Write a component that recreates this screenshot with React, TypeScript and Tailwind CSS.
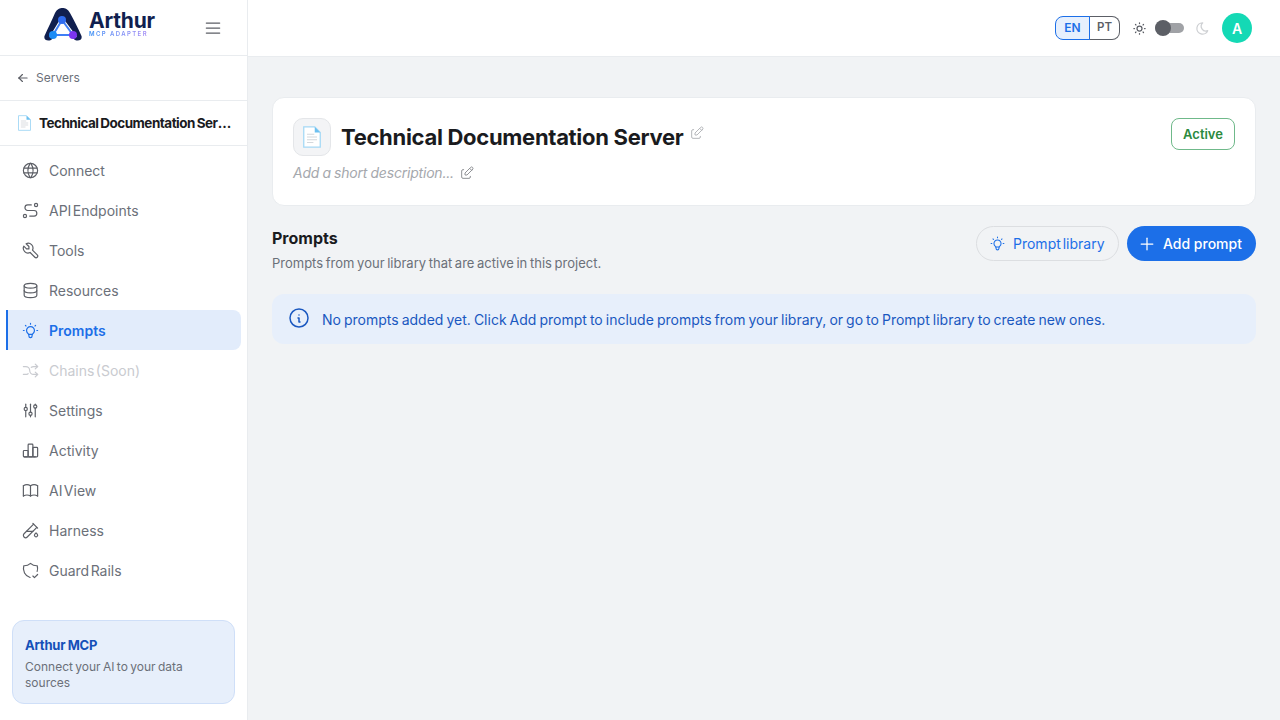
import { FC, ReactNode } from "react";
import {
  TbAdjustments,
  TbArrowLeft,
  TbArrowsShuffle,
  TbBook,
  TbBulb,
  TbChartBar,
  TbDatabase,
  TbEdit,
  TbInfoCircle,
  TbMenu2,
  TbMoon,
  TbPlus,
  TbRoute,
  TbShieldCheck,
  TbSun,
  TbTestPipe,
  TbTool,
  TbWorld,
} from "react-icons/tb";

const navItems = [
  { label: "Connect", icon: <TbWorld size={19} strokeWidth={1.5} /> },
  { label: "API Endpoints", icon: <TbRoute size={19} strokeWidth={1.5} /> },
  { label: "Tools", icon: <TbTool size={19} strokeWidth={1.5} /> },
  { label: "Resources", icon: <TbDatabase size={19} strokeWidth={1.5} /> },
  { label: "Prompts", icon: <TbBulb size={19} strokeWidth={1.5} />, active: true },
  { label: "Chains (Soon)", icon: <TbArrowsShuffle size={19} strokeWidth={1.5} />, disabled: true },
  { label: "Settings", icon: <TbAdjustments size={19} strokeWidth={1.5} /> },
  { label: "Activity", icon: <TbChartBar size={19} strokeWidth={1.5} /> },
  { label: "AI View", icon: <TbBook size={19} strokeWidth={1.5} /> },
  { label: "Harness", icon: <TbTestPipe size={19} strokeWidth={1.5} /> },
  { label: "Guard Rails", icon: <TbShieldCheck size={19} strokeWidth={1.5} /> },
];

const PageIcon: FC<{ className: string }> = ({ className }) => (
  <svg viewBox="0 0 20 24" className={className}>
    <path d="M1 1h12l6 6v16H1z" fill="#fff" stroke="#a5d8f5" strokeWidth="1.4" />
    <path d="M13 1v6h6z" fill="#6cc0f0" />
    <path d="M4.5 9h8M4.5 12h11M4.5 15h11M4.5 18h7" stroke="#d4d8dc" strokeWidth="1.3" />
  </svg>
);

const Logo = () => (
  <div className="flex items-start gap-[7px] -mt-[7px]">
    <svg viewBox="0 0 38 33" className="w-[38px] h-[33px] shrink-0">
      <path
        d="M0.5 28 C4 20 8 12 11 5 C13 1 16 0 18.5 0 C21 0 24 1 26 5 C30 12 34 20 37.5 28 C38.5 31.5 35 33.5 31 32 L18.5 22 L7 32 C3 33.5 -0.5 31.5 0.5 28Z"
        fill="#101f4f"
      />
      <path d="M18 12 L9 27 L29 27Z" fill="#fff" stroke="#fff" strokeWidth="4" />
      <path d="M18 12 L9 27 L29 27Z" fill="#fff" stroke="#3f7ff5" strokeWidth="2" />
      <circle cx="18" cy="12" r="4" fill="#2f6cf0" />
      <circle cx="9" cy="27" r="4" fill="#1d8cf5" />
      <circle cx="29" cy="27" r="4" fill="#7a35f0" />
    </svg>
    <div className="flex flex-col items-start mt-[4px]">
      <span className="text-[21px] leading-[18px] font-bold text-[#101f4f] tracking-[-0.2px]">Arthur</span>
      <span className="text-[6px] leading-[7px] font-semibold tracking-[1.4px] bg-gradient-to-r from-[#2f8cf5] to-[#a58cf5] bg-clip-text text-transparent">
        MCP ADAPTER
      </span>
    </div>
  </div>
);

const SideRow: FC<{ children: ReactNode; className: string }> = ({ children, className }) => (
  <div className={`flex items-center border-b border-[#e9ecef] ${className}`}>{children}</div>
);

const Sidebar = () => (
  <aside className="flex flex-col w-[248px] h-[720px] shrink-0 bg-white border-r border-[#e9ecef]">
    <SideRow className="h-[56px] pl-[44px] pr-[24px] justify-between">
      <Logo />
      <TbMenu2 size={20} strokeWidth={1.5} className="text-[#5c5f66]" />
    </SideRow>
    <SideRow className="h-[45px] pl-[16px] gap-[6px] text-[12px] text-[#6b7079]">
      <TbArrowLeft size={14} className="text-[#5c5f66]" />
      <span>Servers</span>
    </SideRow>
    <SideRow className="h-[45px] pl-[17px] pr-[14px] gap-[7px]">
      <PageIcon className="w-[15px] h-[16px] shrink-0" />
      <span className="truncate text-[13.5px] font-bold tracking-[-0.5px] [word-spacing:-1px] text-[#1a1b1e]">
        Technical Documentation Server
      </span>
    </SideRow>
    <nav className="flex flex-col mt-[4px] pl-[6px] pr-[6px]">
      {navItems.map((item) => (
        <div
          key={item.label}
          className={`flex items-center h-[40px] gap-[9px] pl-[13px] text-[14px] [word-spacing:-2.5px] rounded-r-lg border-l-2 ${
            item.active
              ? "bg-[#e2ecfb] border-[#1c6fe8] text-[#1c6fe8] font-semibold"
              : item.disabled
                ? "border-transparent text-[#c9cbd0]"
                : "border-transparent text-[#6b7079]"
          }`}
        >
          <span className={item.active || item.disabled ? "" : "text-[#5c5f66]"}>{item.icon}</span>
          <span>{item.label}</span>
        </div>
      ))}
    </nav>
    <div className="mt-auto mx-[12px] mb-[16px] h-[84px] px-[12px] pt-[14px] rounded-xl bg-[#e7effb] border border-[#cfdff8]">
      <div className="text-[13px] leading-[20px] font-bold text-[#1450b8] tracking-[-0.2px] [word-spacing:-0.5px]">
        Arthur MCP
      </div>
      <div className="mt-[4px] text-[12px] leading-[16px] text-[#6b7079] [word-spacing:-1px]">
        Connect your AI to your data sources
      </div>
    </div>
  </aside>
);

const TopBar = () => (
  <header className="flex items-center justify-end h-[57px] pr-[28px] bg-white border-b border-[#e9ecef]">
    <div className="flex text-[12px] font-semibold h-[24px]">
      <span className="flex items-center justify-center w-[35px] rounded-l-lg border border-[#1c6fe8] bg-[#e7f0fd] text-[#1c6fe8]">
        EN
      </span>
      <span className="flex items-center justify-center w-[31px] -ml-px rounded-r-lg border border-[#5c5f66] border-l-[#1c6fe8] text-[11.5px] text-[#5c5f66]">
        PT
      </span>
    </div>
    <TbSun size={15} className="ml-[12px] text-[#5c5f66]" />
    <div className="relative ml-[8px] w-[29px] h-[10px] rounded-full bg-[#a0a2a6]">
      <span className="absolute left-0 top-[-3px] w-[16px] h-[16px] rounded-full bg-[#5c5f66]" />
    </div>
    <TbMoon size={15} className="ml-[11px] text-[#ced0d3]" />
    <span className="flex items-center justify-center ml-[12px] w-[30px] h-[30px] rounded-full bg-[#14d9b5] text-white text-[14px] font-semibold">
      A
    </span>
  </header>
);

const ServerCard = () => (
  <section className="flex justify-between h-[109px] p-[20px] bg-white rounded-xl border border-[#e9ecef]">
    <div>
      <div className="flex items-center">
        <span className="flex items-center justify-center w-[38px] h-[38px] rounded-[10px] bg-[#f3f4f6] border border-[#e4e6e9]">
          <PageIcon className="w-[20px] h-[22px]" />
        </span>
        <h1 className="ml-[10px] text-[22px] leading-[32px] font-bold text-[#1a1b1e] tracking-[-0.3px]">
          Technical Documentation Server
        </h1>
        <TbEdit size={16} strokeWidth={1.5} className="ml-[6px] -mt-[8px] text-[#b5b7bb]" />
      </div>
      <div className="flex items-center mt-[6px] gap-[5px]">
        <span className="text-[14px] leading-[22px] italic text-[#a5a8ad] tracking-[-0.2px] [word-spacing:-0.5px]">
          Add a short description...
        </span>
        <TbEdit size={16} strokeWidth={1.5} className="text-[#909296]" />
      </div>
    </div>
    <span className="flex items-center justify-center w-[64px] h-[32px] pt-[1px] rounded-lg border border-[#6fb98a] text-[13px] font-semibold text-[#2b8a3e]">
      Active
    </span>
  </section>
);

const PromptsHeader = () => (
  <section className="flex justify-between mt-[20px]">
    <div>
      <h2 className="text-[16px] leading-[24px] font-bold text-[#1a1b1e]">Prompts</h2>
      <p className="mt-[1px] text-[13px] leading-[24px] text-[#6b7079] [word-spacing:-1px]">
        Prompts from your library that are active in this project.
      </p>
    </div>
    <div className="flex gap-[8px] h-[35px]">
      <button className="flex items-center gap-[7px] w-[143px] pl-[12px] rounded-full border border-[#dcdee1] text-[14px] text-[#1c6fe8] [word-spacing:-2px]">
        <TbBulb size={17} strokeWidth={1.5} />
        Prompt library
      </button>
      <button className="flex items-center gap-[6px] w-[129px] pl-[10px] rounded-full bg-[#1c6fe8] text-[14px] font-medium text-white">
        <TbPlus size={20} strokeWidth={1.5} />
        Add prompt
      </button>
    </div>
  </section>
);

export default function App() {
  return (
    <div className="flex w-[1280px] h-[720px] overflow-hidden bg-[#f1f3f5] font-['Inter',sans-serif]">
      <Sidebar />
      <main className="flex-1">
        <TopBar />
        <div className="px-[24px] pt-[40px]">
          <ServerCard />
          <PromptsHeader />
          <div className="flex items-center gap-[11px] h-[50px] mt-[19px] pl-[15px] rounded-xl bg-[#e7effb] text-[14px] text-[#1a58c0] [word-spacing:-0.9px]">
            <TbInfoCircle size={24} strokeWidth={1.5} className="-mt-[3px]" />
            <span>
              No prompts added yet. Click Add prompt to include prompts from your library, or go to Prompt library to create new ones.
            </span>
          </div>
        </div>
      </main>
    </div>
  );
}
